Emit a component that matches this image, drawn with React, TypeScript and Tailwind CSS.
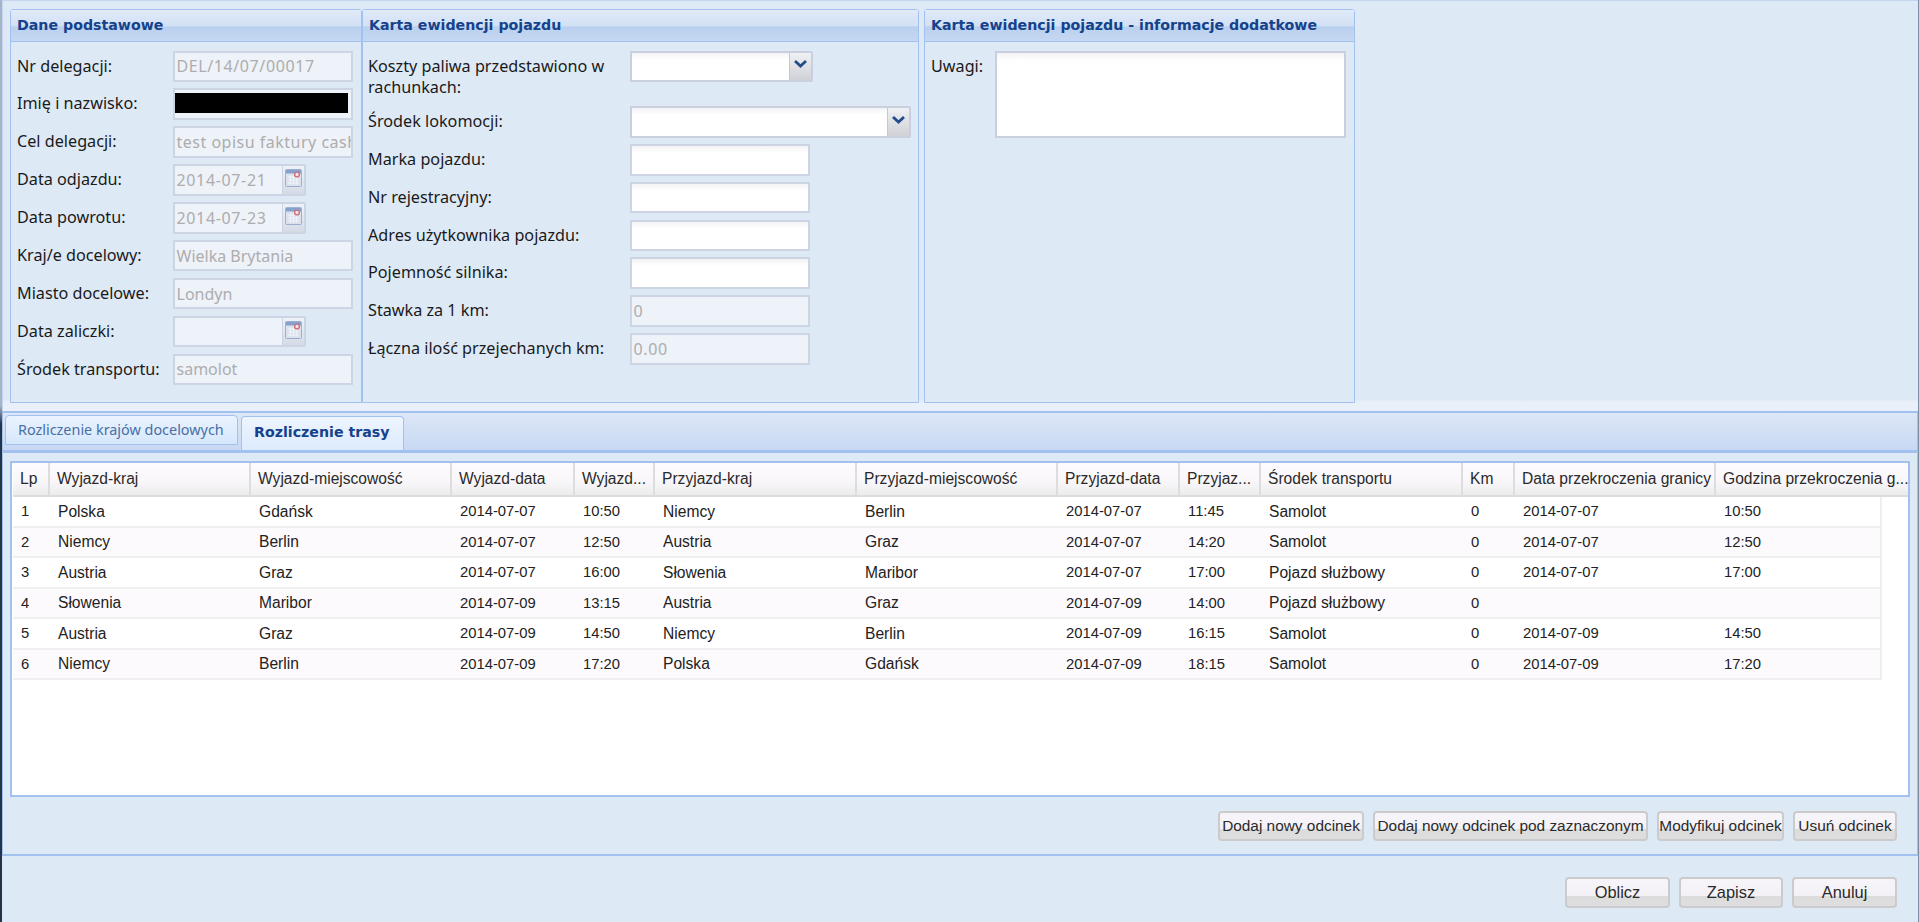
import React from "react";

const FONT = "font-['Noto_Sans','Liberation_Sans',sans-serif]";

function Cal() {
  return (
    <svg width="17" height="18" viewBox="0 0 17 18" aria-hidden="true" className="opacity-80">
      <rect x="0.5" y="0.5" width="16" height="17" rx="1" fill="#d9e1f0" stroke="#8aa3cc" />
      <rect x="1" y="1" width="15" height="3.5" fill="#6d8fc4" />
      <path d="M3 8h11M3 11h11M3 14h11M5.5 6.5v9M8.5 6.5v9M11.5 6.5v9" stroke="#f4f6fb" strokeWidth="1" />
      <circle cx="12" cy="5.5" r="2.4" fill="#f3e3e6" stroke="#c9505f" strokeWidth="1.4" />
    </svg>
  );
}

function Chevron() {
  return (
    <svg width="15" height="10" viewBox="0 0 15 10" aria-hidden="true">
      <path d="M2 2 L7.5 7 L13 2" fill="none" stroke="#234c8c" strokeWidth="2.8" />
    </svg>
  );
}

function Panel({ title, className, children }: { title: string; className: string; children: React.ReactNode }) {
  return (
    <section className={`flex flex-col h-[394px] border-[1.5px] border-[#a3c1ee] rounded-t-[3px] bg-[#dee9f6] ${className}`}>
      <h2 className="h-[31.5px] shrink-0 flex items-center pl-[6px] border-b-[1.5px] border-[#a3c1ee] bg-[linear-gradient(#e0eaf8_0%,#d3e1f5_50%,#b9d0ef_55%,#c6d8f2_100%)] font-['DejaVu_Sans',sans-serif] font-bold text-[14.2px] text-[#15428b] whitespace-nowrap">
        {title}
      </h2>
      {children}
    </section>
  );
}

function Label({ w, children }: { w: string; children: React.ReactNode }) {
  return <label className={`${w} shrink-0 text-[16.2px] leading-[21px] text-[#1a1a1a] pt-[5px]`}>{children}</label>;
}

function Field({ value, w = "w-[180px]", disabled = true, track = "" }: { value?: string; w?: string; disabled?: boolean; track?: string }) {
  return (
    <div
      className={`${w} ${track} h-[31.5px] border-2 border-[#cdd5e5] flex items-center px-[2px] overflow-hidden whitespace-nowrap text-[16px] text-[#adadad] ${
        disabled ? "bg-[#eef2f9]" : "bg-[linear-gradient(#f3f3f6,#ffffff_25%)]"
      }`}
    >
      {value}
    </div>
  );
}

function DateField({ value }: { value?: string }) {
  return (
    <div className="w-[133px] h-[31.5px] border-2 border-[#cdd5e5] rounded-r-[2px] flex overflow-hidden text-[16px] tracking-[0.65px] text-[#adadad] bg-[#eef2f9]">
      <div className="flex-1 px-[2px] flex items-center">{value}</div>
      <div className="w-[22px] shrink-0 border-l border-[#ccd3e2] bg-[linear-gradient(#eef1f7,#d5dbe6)] flex justify-center pt-[3px]">
        <Cal />
      </div>
    </div>
  );
}

function Combo({ w }: { w: string }) {
  return (
    <div className={`${w} h-[31.5px] border-2 border-[#c9cfde] rounded-r-[2px] flex overflow-hidden`}>
      <div className="flex-1 bg-[linear-gradient(#f3f3f6,#ffffff_25%)]" />
      <div className="w-[22px] shrink-0 border-l border-[#c4c8d2] bg-[linear-gradient(#f0f1f4,#d0d1d6)] flex items-center justify-center pb-[4px]">
        <Chevron />
      </div>
    </div>
  );
}

function Row({ label, w, children }: { label: React.ReactNode; w: string; children: React.ReactNode }) {
  return (
    <div className="flex">
      <Label w={w}>{label}</Label>
      {children}
    </div>
  );
}

function Btn({ w, h = "h-[30px]", size = "text-[15.4px]", children }: { w: string; h?: string; size?: string; children: React.ReactNode }) {
  return (
    <button className={`${w} ${h} ${size} shrink-0 border-2 border-[#cbcbcb] rounded-[4px] bg-[linear-gradient(#f7f5f9_0%,#f3f1f5_62%,#dcdcdc_63%,#dedede_100%)] text-[#2a2a2a] font-['Liberation_Sans',sans-serif] whitespace-nowrap`}>
      {children}
    </button>
  );
}

const headers = [
  "Lp", "Wyjazd-kraj", "Wyjazd-miejscowość", "Wyjazd-data", "Wyjazd...", "Przyjazd-kraj",
  "Przyjazd-miejscowość", "Przyjazd-data", "Przyjaz...", "Środek transportu", "Km",
  "Data przekroczenia granicy", "Godzina przekroczenia g...",
];

const rows = [
  ["1", "Polska", "Gdańsk", "2014-07-07", "10:50", "Niemcy", "Berlin", "2014-07-07", "11:45", "Samolot", "0", "2014-07-07", "10:50"],
  ["2", "Niemcy", "Berlin", "2014-07-07", "12:50", "Austria", "Graz", "2014-07-07", "14:20", "Samolot", "0", "2014-07-07", "12:50"],
  ["3", "Austria", "Graz", "2014-07-07", "16:00", "Słowenia", "Maribor", "2014-07-07", "17:00", "Pojazd służbowy", "0", "2014-07-07", "17:00"],
  ["4", "Słowenia", "Maribor", "2014-07-09", "13:15", "Austria", "Graz", "2014-07-09", "14:00", "Pojazd służbowy", "0", "", ""],
  ["5", "Austria", "Graz", "2014-07-09", "14:50", "Niemcy", "Berlin", "2014-07-09", "16:15", "Samolot", "0", "2014-07-09", "14:50"],
  ["6", "Niemcy", "Berlin", "2014-07-09", "17:20", "Polska", "Gdańsk", "2014-07-09", "18:15", "Samolot", "0", "2014-07-09", "17:20"],
];

const numericCols = [0, 3, 4, 7, 8, 10, 11, 12];

export default function App() {
  return (
    <div className={`w-[1919px] h-[922px] overflow-hidden flex bg-[#dee9f6] ${FONT}`}>
      <div className="w-[2px] shrink-0 bg-[linear-gradient(#a5b4c6_0%,#a5b4c6_44%,#243447_46%,#243447_100%)]" />
      <main className="flex-1 min-w-0 flex flex-col">
        {/* Top forms */}
        <div className="h-[413px] shrink-0 flex items-start pl-[8px] pt-[9px] border-b-2 border-b-[#a3c1ee] shadow-[inset_1px_1px_0_#c3d5f0] bg-[linear-gradient(#dee9f6_97%,#e9f0f9_98%)]">
          <Panel title="Dane podstawowe" className="w-[352px]">
            <div className="flex flex-col gap-[6.4px] pt-[9px] pl-[6px]">
              <Row w="w-[155.5px]" label="Nr delegacji:"><Field value="DEL/14/07/00017" track="tracking-[0.6px]" /></Row>
              <Row w="w-[155.5px]" label="Imię i nazwisko:">
                <div className="w-[180px] h-[31.5px] border-2 border-[#cdd5e5] bg-[#eef2f9] pt-[3px]">
                  <div className="w-[173px] h-[20px] bg-black" />
                </div>
              </Row>
              <Row w="w-[155.5px]" label="Cel delegacji:"><Field value="test opisu faktury cash" track="tracking-[0.5px]" /></Row>
              <Row w="w-[155.5px]" label="Data odjazdu:"><DateField value="2014-07-21" /></Row>
              <Row w="w-[155.5px]" label="Data powrotu:"><DateField value="2014-07-23" /></Row>
              <Row w="w-[155.5px]" label="Kraj/e docelowy:"><Field value="Wielka Brytania" /></Row>
              <Row w="w-[155.5px]" label="Miasto docelowe:"><Field value="Londyn" /></Row>
              <Row w="w-[155.5px]" label="Data zaliczki:"><DateField /></Row>
              <Row w="w-[155.5px]" label="Środek transportu:"><Field value="samolot" /></Row>
            </div>
          </Panel>
          <Panel title="Karta ewidencji pojazdu" className="w-[557px]">
            <div className="flex flex-col gap-[6.3px] pt-[9px] pl-[5px]">
              <div className="h-[49.5px]">
                <Row w="w-[261.5px]" label={<>Koszty paliwa przedstawiono w<br />rachunkach:</>}><Combo w="w-[183px]" /></Row>
              </div>
              <Row w="w-[261.5px]" label="Środek lokomocji:"><Combo w="w-[281px]" /></Row>
              <Row w="w-[261.5px]" label="Marka pojazdu:"><Field w="w-[180px]" disabled={false} /></Row>
              <Row w="w-[261.5px]" label="Nr rejestracyjny:"><Field w="w-[180px]" disabled={false} /></Row>
              <Row w="w-[261.5px]" label="Adres użytkownika pojazdu:"><Field w="w-[180px]" disabled={false} /></Row>
              <Row w="w-[261.5px]" label="Pojemność silnika:"><Field w="w-[180px]" disabled={false} /></Row>
              <Row w="w-[261.5px]" label="Stawka za 1 km:"><Field w="w-[180px]" value="0" /></Row>
              <Row w="w-[261.5px]" label="Łączna ilość przejechanych km:"><Field w="w-[180px]" value="0.00" track="tracking-[0.6px]" /></Row>
            </div>
          </Panel>
          <Panel title="Karta ewidencji pojazdu - informacje dodatkowe" className="w-[431px] ml-[5px]">
            <div className="flex pt-[9px] pl-[6px]">
              <Label w="w-[63.5px]">Uwagi:</Label>
              <div className="w-[351px] h-[87px] border-2 border-[#c9cfde] bg-[linear-gradient(#f3f3f6,#ffffff_10%)]" />
            </div>
          </Panel>
        </div>

        {/* Tabs */}
        <div className="h-[443px] shrink-0 flex flex-col border-x border-[#a3c1ee] border-b-2 border-b-[#a3c1ee]">
          <div className="h-[37px] shrink-0 flex items-end gap-[3px] pl-[2px] bg-[linear-gradient(#dce7f7,#c8d8f4)]">
            <div className="w-[233px] h-[30px] mb-[5px] self-end border-[1.5px] border-[#a3c1ee] rounded-t-[4px] bg-[linear-gradient(#eaf3fe,#d6e7fc)] flex items-center pl-[12px] text-[14.4px] text-[#4a6fa5] whitespace-nowrap">
              Rozliczenie krajów docelowych
            </div>
            <div className="w-[163px] h-[34px] border-[1.5px] border-b-0 border-[#a3c1ee] rounded-t-[4px] bg-[linear-gradient(#eef5fe,#dcebfd)] flex items-center pl-[12px] pb-[2px] font-['DejaVu_Sans',sans-serif] font-bold text-[14.2px] text-[#15428b] whitespace-nowrap">
              Rozliczenie trasy
            </div>
          </div>
          <div className="flex-1 min-h-0 flex flex-col border-t-[3px] border-[#a3c1ee] pt-[8px] px-[7px]">
            <div className="h-[336px] shrink-0 border-2 border-[#a3c1ee] bg-white pl-px overflow-hidden font-['Liberation_Sans',sans-serif]">
              <div className="grid grid-cols-[37px_201px_201px_123px_80px_202px_201px_122px_81px_202px_52px_201px_1fr] h-[34px] bg-[linear-gradient(#fdfbfe_0%,#f9f7fa_55%,#ececec_100%)] border-b-2 border-[#dcdcdc]">
                {headers.map((h) => (
                  <div key={h} className="flex items-center pl-[7px] border-r-2 border-[#dddddd] last:border-r-0 text-[15.6px] text-[#2a2a2a] whitespace-nowrap">
                    {h}
                  </div>
                ))}
              </div>
              {rows.map((r, i) => (
                <div
                  key={r[0]}
                  className={`grid grid-cols-[37px_201px_201px_123px_80px_202px_201px_122px_81px_202px_52px_201px_166px] h-[30.5px] w-[1869px] border-b-2 border-r-2 border-[#f0eff0] ${
                    i % 2 ? "bg-[#fdfafd]" : "bg-white"
                  }`}
                >
                  {r.map((c, j) => (
                    <div
                      key={j}
                      className={`flex items-center pl-[8px] text-[#222222] whitespace-nowrap ${
                        numericCols.includes(j) ? "text-[14.8px]" : "text-[15.6px]"
                      }`}
                    >
                      {c}
                    </div>
                  ))}
                </div>
              ))}
            </div>
            <div className="flex justify-end pt-[14px] pr-[13px] gap-[9px]">
              <Btn w="w-[146px]">Dodaj nowy odcinek</Btn>
              <Btn w="w-[275px]">Dodaj nowy odcinek pod zaznaczonym</Btn>
              <Btn w="w-[127px]">Modyfikuj odcinek</Btn>
              <Btn w="w-[104px]">Usuń odcinek</Btn>
            </div>
          </div>
        </div>

        {/* Footer */}
        <div className="flex justify-end gap-[9px] pt-[21px] pr-[21px]">
          <Btn w="w-[105px]" h="h-[31px]" size="text-[16.4px]">Oblicz</Btn>
          <Btn w="w-[104px]" h="h-[31px]" size="text-[16.4px]">Zapisz</Btn>
          <Btn w="w-[105px]" h="h-[31px]" size="text-[16.4px]">Anuluj</Btn>
        </div>
      </main>
      <div className="w-px shrink-0 bg-[#7f8fa3]" />
    </div>
  );
}
